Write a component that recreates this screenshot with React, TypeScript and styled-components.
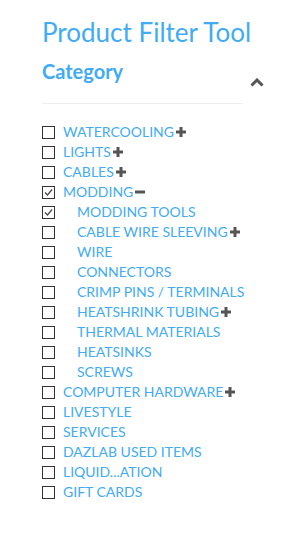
import styled, { createGlobalStyle } from "styled-components"

const GlobalStyle = createGlobalStyle`
  body {
    margin: 0;
    background: #fff;
    font-family: Lato, "Open Sans", sans-serif;
  }
`

const colors = {
  link: "#41abf3",
  icon: "#555555",
  box: "#333333",
  line: "#eeeeee",
}

const Panel = styled.aside`
  width: 222px;
  padding: 14px 0 0 42px;
`

const Title = styled.h1`
  margin: 0;
  font-size: 26px;
  line-height: 36px;
  font-weight: 400;
  color: ${colors.link};
`

const HeaderRow = styled.div`
  display: flex;
  align-items: flex-end;
  justify-content: space-between;
  margin-top: 8px;
`

const Heading = styled.h2`
  margin: 0;
  font-size: 20px;
  line-height: 26px;
  font-weight: 700;
  color: ${colors.link};
`

const Chevron = styled.svg`
  width: 14px;
  height: 9px;
  margin-bottom: -3px;
`

const Divider = styled.hr`
  border: 0;
  border-top: 1px solid ${colors.line};
  margin: 19px 21px 18px 0;
`

const List = styled.ul`
  list-style: none;
  margin: 0;
  padding: 0;
`

const Row = styled.li`
  display: flex;
  align-items: center;
  height: 20px;
`

const Box = styled.span<{ $sub: boolean }>`
  flex: none;
  width: 11px;
  height: 11px;
  border: 1px solid ${colors.box};
  display: flex;
  align-items: center;
  justify-content: center;
  margin-right: ${(p) => (p.$sub ? "22px" : "8px")};
`

const Label = styled.a`
  font-size: 14px;
  line-height: 20px;
  color: ${colors.link};
  text-decoration: none;
  white-space: nowrap;
`

const Toggle = styled.svg`
  width: 10px;
  height: 10px;
  margin-left: 2px;
  flex: none;
`

type Item = {
  name: string
  sub?: boolean
  checked?: boolean
  toggle?: "plus" | "minus"
}

const items: Item[] = [
  { name: "WATERCOOLING", toggle: "plus" },
  { name: "LIGHTS", toggle: "plus" },
  { name: "CABLES", toggle: "plus" },
  { name: "MODDING", checked: true, toggle: "minus" },
  { name: "MODDING TOOLS", sub: true, checked: true },
  { name: "CABLE WIRE SLEEVING", sub: true, toggle: "plus" },
  { name: "WIRE", sub: true },
  { name: "CONNECTORS", sub: true },
  { name: "CRIMP PINS / TERMINALS", sub: true },
  { name: "HEATSHRINK TUBING", sub: true, toggle: "plus" },
  { name: "THERMAL MATERIALS", sub: true },
  { name: "HEATSINKS", sub: true },
  { name: "SCREWS", sub: true },
  { name: "COMPUTER HARDWARE", toggle: "plus" },
  { name: "LIVESTYLE" },
  { name: "SERVICES" },
  { name: "DAZLAB USED ITEMS" },
  { name: "LIQUID...ATION" },
  { name: "GIFT CARDS" },
]

export default function App() {
  return (
    <>
      <GlobalStyle />
      <Panel>
        <Title>Product Filter Tool</Title>
        <HeaderRow>
          <Heading>Category</Heading>
          <Chevron viewBox="0 0 14 9">
            <path d="M1.5 7.5 L7 2 L12.5 7.5" fill="none" stroke={colors.icon} strokeWidth="3" />
          </Chevron>
        </HeaderRow>
        <Divider />
        <List>
          {items.map((item) => (
            <Row key={item.name}>
              <Box $sub={!!item.sub}>
                {item.checked && (
                  <svg width="9" height="9" viewBox="0 0 9 9">
                    <path d="M1 4.5 L3.5 7 L8 1.5" fill="none" stroke="#444" strokeWidth="1.2" />
                  </svg>
                )}
              </Box>
              <Label href="#">{item.name}</Label>
              {item.toggle && (
                <Toggle viewBox="0 0 10 10">
                  <rect x="0" y="3.5" width="10" height="3" fill={colors.icon} />
                  {item.toggle === "plus" && <rect x="3.5" y="0" width="3" height="10" fill={colors.icon} />}
                </Toggle>
              )}
            </Row>
          ))}
        </List>
      </Panel>
    </>
  )
}
